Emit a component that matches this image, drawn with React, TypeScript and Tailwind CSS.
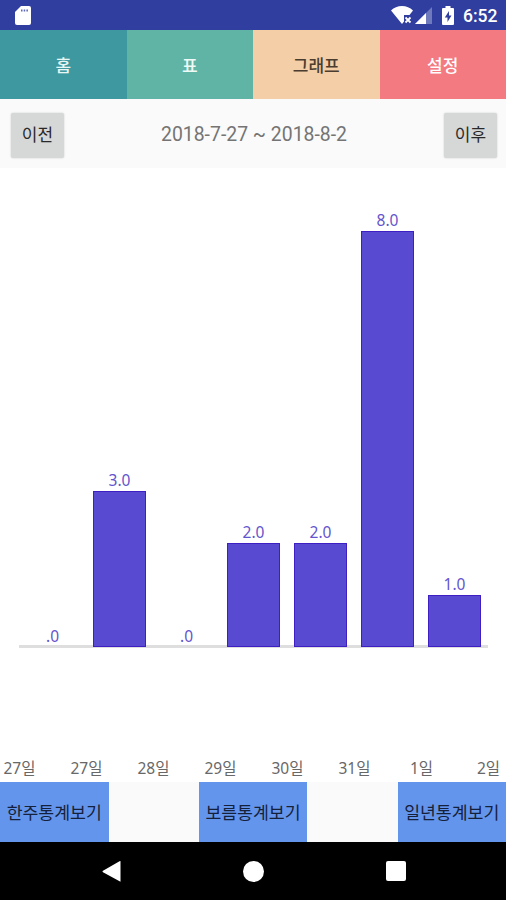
import clsx from 'clsx';

const tabs = [
  { label: '홈', className: 'bg-[#3d999f] text-[#e9f6f6]' },
  { label: '표', className: 'bg-[#5fb4a5] text-[#effaf7]' },
  { label: '그래프', className: 'bg-[#f4cea7] text-[#4a3d30]' },
  { label: '설정', className: 'bg-[#f37a81] text-white' },
];

const values = [0, 3, 0, 2, 2, 8, 1];
const days = ['27일', '27일', '28일', '29일', '30일', '31일', '1일', '2일'];
const periods = ['한주통계보기', '보름통계보기', '일년통계보기'];

const UNIT_HEIGHT = 52;

function StatusBar() {
  return (
    <header className="flex h-[30px] items-center bg-[#303f9f] pl-[15px] pr-[9px] text-white">
      <svg className="h-[19px] w-4" viewBox="0 0 16 19" fill="currentColor">
        <path d="M6 0h8a2 2 0 0 1 2 2v15a2 2 0 0 1-2 2H2a2 2 0 0 1-2-2V6z" />
        <path d="M6 3.500h1.500v2H6zM8.700 3.500h1.500v2H8.700zM11.400 3.500h1.500v2h-1.500z" fill="#5c68b4" />
      </svg>
      <div className="ml-auto flex items-center">
        <svg className="h-[18px] w-[22px]" viewBox="0 0 22 18">
          <path d="M0 4.500C3 1.700 6.700 0 11 0s8 1.700 11 4.500L18.500 9H13v6.500L11 18z" fill="white" />
          <path d="m14.500 11.500 5 5m0-5-5 5" stroke="white" strokeWidth="1.800" />
        </svg>
        <svg className="ml-0.5 h-[17px] w-[17px]" viewBox="0 0 17 17">
          <path d="M0 17 17 0v17z" fill="#6f7abc" />
          <path d="M0 17 11 6v11z" fill="white" />
        </svg>
        <svg className="ml-2.5 h-[19px] w-3" viewBox="0 0 12 19">
          <path d="M3.500 2V0h5v2H11a1 1 0 0 1 1 1v15a1 1 0 0 1-1 1H1a1 1 0 0 1-1-1V3a1 1 0 0 1 1-1z" fill="white" />
          <path d="M7 5 2.800 11.500h2.700V16l4-6.500H7z" fill="#303f9f" />
        </svg>
        <span className="ml-[9px] w-[34px] whitespace-nowrap pt-0.5 text-right font-[Roboto] text-[17.5px] font-medium leading-[30px]">
          6:52
        </span>
      </div>
    </header>
  );
}

function NavButton({ label }: { label: string }) {
  return (
    <button className="h-[45px] w-[53px] rounded-[2px] bg-[#d6d7d7] text-[17px] leading-[40px] text-[#292929] shadow-[0_0_2px_rgba(0,0,0,0.2)]">
      {label}
    </button>
  );
}

function Chart() {
  return (
    <section className="flex h-[614px] flex-col overflow-hidden bg-white font-['Noto_Sans','Noto_Sans_CJK_KR',sans-serif]">
      <div className="relative ml-[19px] mr-[18px] flex h-[480px] items-end">
        <div className="absolute inset-x-0 bottom-0 h-[3px] bg-[#dedede]" />
        {values.map((value, i) => (
          <div key={i} className="relative flex w-[67px] flex-col items-center pb-px">
            <span className="text-[15.5px] leading-[22px] text-[#6355cd]">
              {value === 0 ? '.0' : value.toFixed(1)}
            </span>
            <div
              className={clsx('w-[53.5px] bg-[#584ad1]', value > 0 && 'border border-[#3d1fc4]')}
              style={{ height: value * UNIT_HEIGHT }}
            />
          </div>
        ))}
      </div>
      <div className="mt-auto flex justify-center pb-[3px] pl-0.5">
        {days.map((day, i) => (
          <span key={i} className="w-[67px] shrink-0 text-center text-[15.5px] leading-[22px] text-[#686868]">
            {day}
          </span>
        ))}
      </div>
    </section>
  );
}

export default function App() {
  return (
    <div className="flex h-[900px] w-[506px] flex-col overflow-hidden bg-[#fafafa] font-[Roboto,'Noto_Sans_CJK_KR',sans-serif]">
      <StatusBar />
      <nav className="grid h-[69px] grid-cols-4">
        {tabs.map((tab) => (
          <button key={tab.label} className={clsx('pt-1 text-[17px] font-medium', tab.className)}>
            {tab.label}
          </button>
        ))}
      </nav>

      <div className="flex h-[69px] items-center justify-between pl-[11px] pr-[9px] pt-[3px]">
        <NavButton label="이전" />
        <span className="text-[19.4px] text-[#747474]">2018-7-27 ~ 2018-8-2</span>
        <NavButton label="이후" />
      </div>

      <Chart />

      <div className="flex h-[60px] justify-between">
        {periods.map((period) => (
          <button key={period} className="w-[108.5px] whitespace-nowrap bg-[#6495ed] pt-[3px] text-[17.25px] text-[#15213a]">
            {period}
          </button>
        ))}
      </div>

      <footer className="flex h-[58px] items-center justify-center gap-[122px] bg-black text-white">
        <svg className="h-[21px] w-5" viewBox="0 0 20 21" fill="currentColor">
          <path d="M19.500.300v20.400L2 11.200q-1-.700 0-1.400L18.500.300q1-.600 1 0z" />
        </svg>
        <div className="size-[21px] rounded-full bg-white" />
        <div className="size-5 rounded-[2px] bg-white" />
      </footer>
    </div>
  );
}
